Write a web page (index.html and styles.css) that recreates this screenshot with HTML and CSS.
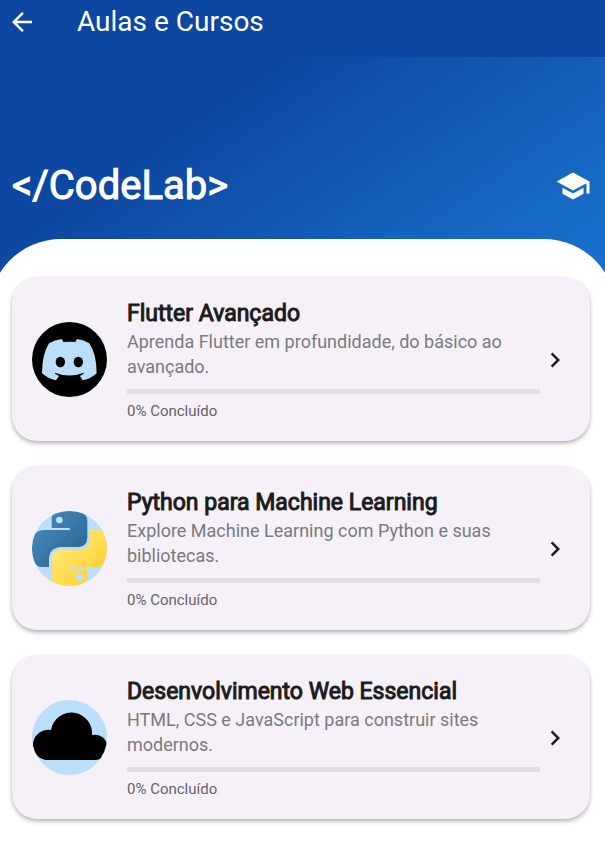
FILE: index.html
```html
<!DOCTYPE html>
<html lang="pt-BR">
<head>
<meta charset="utf-8">
<meta name="viewport" content="width=device-width, initial-scale=1">
<title>Aulas e Cursos</title>
<link rel="stylesheet" href="styles.css">
</head>
<body>
<header class="appbar">
  <button class="back" type="button" aria-label="Voltar">
    <svg viewBox="0 0 24 24" aria-hidden="true"><path d="M20 11H7.83l5.59-5.59L12 4l-8 8 8 8 1.41-1.41L7.83 13H20v-2z"/></svg>
  </button>
  <h1 class="appbar-title">Aulas e Cursos</h1>
</header>
<main class="page">
  <section class="hero">
    <p class="brand">&lt;/CodeLab&gt;</p>
    <svg class="school" viewBox="0 0 24 24" aria-hidden="true"><path d="M5 13.18v4L12 21l7-3.82v-4L12 17l-7-3.82zM12 3L1 9l11 6 9-4.910V17h2V9L12 3z"/></svg>
  </section>
  <section class="sheet">
    <a class="card" href="#flutter">
      <svg class="avatar" viewBox="36 33 225 225" aria-hidden="true">
        <circle cx="148.500" cy="145.500" r="112.500" fill="#000"/>
        <path fill="#bbdefb" d="M126 84Q104 87 87 97Q66 130 66 187Q84 203 108 208L117 195L105 188V185Q148 202 191 185V188L180 195L188 208Q213 203 230 187Q230 130 208 97Q192 87 171 84L166 93Q148 91 130 93Z"/>
        <ellipse cx="121" cy="153" rx="14" ry="16"/>
        <ellipse cx="175" cy="153" rx="14" ry="16"/>
      </svg>
      <div class="info">
        <h2 class="title">Flutter Avançado</h2>
        <p class="desc">Aprenda Flutter em profundidade, do básico ao avançado.</p>
        <progress class="bar" value="0" max="100" aria-label="Progresso"></progress>
        <p class="status">0% Concluído</p>
      </div>
      <svg class="chevron" viewBox="0 0 24 24" aria-hidden="true"><path d="M10 6L8.590 7.410 13.170 12l-4.580 4.590L10 18l6-6z"/></svg>
    </a>
    <a class="card" href="#python">
      <svg class="avatar" viewBox="36 30 225 225" aria-hidden="true">
        <defs>
          <linearGradient id="pyBlue" x1="0" y1="0" x2="1" y2="1"><stop offset=".1" stop-color="#478bbd"/><stop offset=".8" stop-color="#306998"/></linearGradient>
          <linearGradient id="pyGold" x1="0" y1="0" x2="1" y2="1"><stop offset=".2" stop-color="#ffe873"/><stop offset=".75" stop-color="#ffd43b"/></linearGradient>
          <clipPath id="pyClip"><circle cx="148.500" cy="142.500" r="112.500"/></clipPath>
        </defs>
        <g clip-path="url(#pyClip)">
          <path fill="#bbdefb" d="M36 30h225v225H36z"/>
          <path fill="url(#pyBlue)" d="M95 81V48Q99 31 148 29Q202 31 202 58V111Q200 137 175 138H122Q91 140 87 169V198H65Q35 198 35 142Q35 87 72 87H149V81Z"/>
          <path fill="url(#pyGold)" d="M210 87H232Q262 87 262 142Q262 198 232 198H148V204H202V229Q200 256 148 256Q95 256 95 229V173Q97 148 122 147H175Q208 145 210 114Z"/>
          <circle cx="118" cy="57" r="10" fill="#bbdefb"/>
          <circle cx="179" cy="228" r="11" fill="#bbdefb"/>
        </g>
      </svg>
      <div class="info">
        <h2 class="title">Python para Machine Learning</h2>
        <p class="desc">Explore Machine Learning com Python e suas bibliotecas.</p>
        <progress class="bar" value="0" max="100" aria-label="Progresso"></progress>
        <p class="status">0% Concluído</p>
      </div>
      <svg class="chevron" viewBox="0 0 24 24" aria-hidden="true"><path d="M10 6L8.590 7.410 13.170 12l-4.580 4.590L10 18l6-6z"/></svg>
    </a>
    <a class="card" href="#web">
      <svg class="avatar" viewBox="36 27 225 225" aria-hidden="true">
        <defs><clipPath id="webClip"><circle cx="148.500" cy="139.500" r="112.500"/></clipPath></defs>
        <g clip-path="url(#webClip)">
          <path fill="#bbdefb" d="M36 27h225v225H36z"/>
          <path d="M76 207A45 45 0 1 1 93 117A62 62 0 0 1 216 132A38 38 0 1 1 224 207Z"/>
        </g>
      </svg>
      <div class="info">
        <h2 class="title">Desenvolvimento Web Essencial</h2>
        <p class="desc">HTML, CSS e JavaScript para construir sites modernos.</p>
        <progress class="bar" value="0" max="100" aria-label="Progresso"></progress>
        <p class="status">0% Concluído</p>
      </div>
      <svg class="chevron" viewBox="0 0 24 24" aria-hidden="true"><path d="M10 6L8.590 7.410 13.170 12l-4.580 4.590L10 18l6-6z"/></svg>
    </a>
  </section>
</main>
</body>
</html>
```
FILE: styles.css
```css
* {
  box-sizing: border-box;
}

body {
  margin: 0;
  min-height: 100vh;
  display: flex;
  flex-direction: column;
  background: #fff;
  font-family: Roboto, "Liberation Sans", sans-serif;
}

h1, h2, p {
  margin: 0;
  font-weight: 400;
}

.appbar {
  display: flex;
  align-items: flex-start;
  gap: 40px;
  padding: 5px 7px 18px;
  background: #0d47a1;
  color: #fff;
}

.back {
  display: flex;
  padding: 2px 0;
  border: 0;
  background: none;
}

.back svg {
  width: 30px;
  height: 30px;
  fill: #fff;
}

.appbar-title {
  font-size: 28px;
  line-height: 34px;
}

.page {
  flex: 1;
  display: flex;
  flex-direction: column;
  overflow: hidden;
  background: linear-gradient(146deg, #0d47a1 16%, #1565c0 39%, #1976d2 57%);
}

.hero {
  display: flex;
  align-items: center;
  justify-content: space-between;
  padding: 104px 14px 28px 12px;
  color: #fff;
}

.brand {
  font-size: 40px;
  line-height: 50px;
  -webkit-text-stroke: 1px currentColor;
}

.school {
  width: 36px;
  height: 36px;
  fill: #fff;
}

.sheet {
  flex: 1;
  display: flex;
  flex-direction: column;
  gap: 25px;
  margin: 0 -11px;
  padding: 38px 26px 34px 23px;
  border-radius: 72px 72px 0 0;
  background: #fff;
}

.card {
  display: flex;
  align-items: center;
  gap: 20px;
  padding: 21px 20px 20px;
  border-radius: 25px;
  background: #f6f1f9;
  box-shadow: 0 3px 4px rgba(0, 0, 0, 0.22), 0 1px 3px rgba(0, 0, 0, 0.1);
  color: #1d1b20;
  text-decoration: none;
}

.avatar {
  flex: none;
  width: 75px;
  height: 75px;
}

.info {
  flex: 1;
  min-width: 0;
}

.title {
  font-size: 23px;
  line-height: 31px;
  -webkit-text-stroke: 1px currentColor;
}

.desc {
  font-size: 18px;
  line-height: 25px;
  color: #7b797d;
}

.bar {
  display: block;
  appearance: none;
  width: 100%;
  height: 5px;
  margin: 10px 0 7px;
  border: 0;
  background: #e0e0e0;
}

.bar::-webkit-progress-bar {
  background: #e0e0e0;
}

.bar::-webkit-progress-value {
  background: #1565c0;
}

.status {
  font-size: 15px;
  line-height: 20px;
  color: #656368;
}

.chevron {
  flex: none;
  width: 30px;
  height: 30px;
  margin-left: -20px;
  fill: #1d1b20;
}
```
